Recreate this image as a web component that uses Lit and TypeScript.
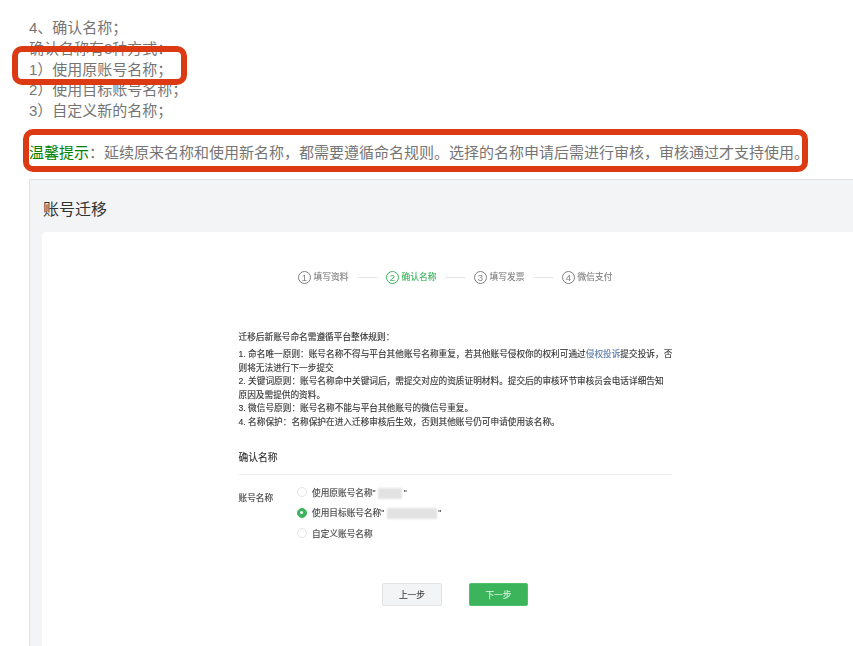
import { LitElement, html, css } from "lit";
import { customElement } from "lit/decorators.js";

const steps = ["填写资料", "确认名称", "填写发票", "微信支付"];

@customElement("app-root")
export class AppRoot extends LitElement {
  static styles = css`
    :host {
      display: block;
      position: relative;
      width: 853px;
      height: 646px;
      overflow: hidden;
      background: #fff;
      font-family: "Liberation Sans", "Noto Sans CJK SC", sans-serif;
    }
    .article {
      padding: 18px 0 0 29px;
      color: #757575;
      font-size: 15px;
      line-height: 20.75px;
    }
    .article p { margin: 0; white-space: nowrap; }
    .tip { margin-top: 21px !important; }
    .tip b { font-weight: 400; color: #008000; }
    .mark {
      position: absolute;
      box-sizing: border-box;
      border: 6px solid #dc3a13;
      border-radius: 10px;
      pointer-events: none;
    }
    .mark.one { left: 12px; top: 46px; width: 175px; height: 39px; }
    .mark.two { left: 23px; top: 129px; width: 785px; height: 43px; }
    .panel {
      margin: 15px 0 0 29px;
      width: 900px;
      height: 480px;
      box-sizing: border-box;
      background: #f3f4f6;
      border-top: 1px solid #e2e2e2;
      border-left: 1px solid #e2e2e2;
      padding: 19px 0 0 12px;
    }
    .panel h1 {
      margin: 0 0 11px 1px;
      font-size: 16px;
      line-height: 22px;
      font-weight: 400;
      color: #333;
    }
    .card {
      width: 826px;
      height: 420px;
      box-sizing: border-box;
      background: #fff;
      border-radius: 4px;
      padding-top: 39px;
      color: #333;
      font-size: 8.67px;
      filter: blur(0.35px);
      -webkit-text-stroke: 0.12px currentColor;
    }
    .steps {
      display: flex;
      justify-content: center;
      align-items: center;
      color: #808080;
      font-size: 8.75px;
      line-height: 13px;
    }
    .step { display: flex; align-items: center; gap: 2.5px; width: 50px; white-space: nowrap; }
    .step.on { color: #3cb45c; }
    .num {
      box-sizing: border-box;
      flex: none;
      width: 13px;
      height: 13px;
      border: 1px solid currentColor;
      border-radius: 50%;
      display: flex;
      align-items: center;
      justify-content: center;
      font-size: 9.5px;
      -webkit-text-stroke: 0;
    }
    .rule { width: 19px; height: 1px; background: #e2e2e2; margin: 0 9px 0 10px; }
    .body { width: 433px; margin: 47.5px auto 0; }
    .rules { line-height: 13.6px; color: #333; }
    .rules p { margin: 0; white-space: nowrap; }
    .rules .head { margin-bottom: 3.4px; }
    .rules span { color: #5a7aa8; }
    .section {
      margin: 21.5px 0 0;
      font-size: 9.75px;
      font-weight: 400;
      line-height: 14px;
      padding-bottom: 9px;
      border-bottom: 1px solid #ececec;
      color: #333;
    }
    .form { display: flex; margin-top: 7px; }
    .label { width: 58px; padding-top: 6px; line-height: 20.5px; color: #444; }
    .options { display: flex; flex-direction: column; }
    .option { display: flex; align-items: center; height: 20.5px; gap: 5.5px; color: #444; white-space: nowrap; }
    .radio {
      box-sizing: border-box;
      width: 10px;
      height: 10px;
      border: 1px solid #e4e4e4;
      border-radius: 50%;
      background: #fff;
    }
    .radio.on { background: #3cb45c; border-color: #3cb45c; display: flex; align-items: center; justify-content: center; }
    .radio.on::after { content: ""; width: 3px; height: 3px; border-radius: 50%; background: #fff; }
    .smudge { display: inline-block; height: 11px; background: #e2e2e2; filter: blur(1.2px); vertical-align: middle; margin: 0 1.5px 0 2.5px; }
    .smudge.s { width: 24px; }
    .smudge.l { width: 50px; }
    .actions { display: flex; justify-content: center; gap: 27px; margin-top: 39px; }
    .btn {
      box-sizing: border-box;
      height: 23px;
      border-radius: 2px;
      display: flex;
      align-items: center;
      justify-content: center;
      font-size: 8.75px;
    }
    .btn.prev { width: 60px; background: #f3f4f6; border: 1px solid #e3e3e3; color: #444; }
    .btn.next { width: 59px; background: #3cb45c; border: 1px solid #4fc06e; color: #d8f2df; }
  `;

  render() {
    return html`
      <div class="article">
        <p>4、确认名称；</p>
        <p>确认名称有3种方式：</p>
        <p>1）使用原账号名称；</p>
        <p>2）使用目标账号名称；</p>
        <p>3）自定义新的名称；</p>
        <p class="tip"><b>温馨提示</b>：延续原来名称和使用新名称，都需要遵循命名规则。选择的名称申请后需进行审核，审核通过才支持使用。</p>
      </div>
      <div class="mark one"></div>
      <div class="mark two"></div>
      <section class="panel">
        <h1>账号迁移</h1>
        <div class="card">
          <div class="steps">
            ${steps.map(
              (s, i) => html`
                ${i ? html`<div class="rule"></div>` : ""}
                <div class="step ${i === 1 ? "on" : ""}"><span class="num">${i + 1}</span>${s}</div>
              `
            )}
          </div>
          <div class="body">
            <div class="rules">
              <p class="head">迁移后新账号命名需遵循平台整体规则：</p>
              <p>1. 命名唯一原则：账号名称不得与平台其他账号名称重复，若其他账号侵权你的权利可通过<span>侵权投诉</span>提交投诉，否</p>
              <p>则将无法进行下一步提交</p>
              <p>2. 关键词原则：账号名称命中关键词后，需提交对应的资质证明材料。提交后的审核环节审核员会电话详细告知</p>
              <p>原因及需提供的资料。</p>
              <p>3. 微信号原则：账号名称不能与平台其他账号的微信号重复。</p>
              <p>4. 名称保护：名称保护在进入迁移审核后生效，否则其他账号仍可申请使用该名称。</p>
            </div>
            <h2 class="section">确认名称</h2>
            <div class="form">
              <div class="label">账号名称</div>
              <div class="options">
                <div class="option"><i class="radio"></i><span>使用原账号名称"<i class="smudge s"></i>"</span></div>
                <div class="option"><i class="radio on"></i><span>使用目标账号名称"<i class="smudge l"></i>"</span></div>
                <div class="option"><i class="radio"></i><span>自定义账号名称</span></div>
              </div>
            </div>
            <div class="actions">
              <div class="btn prev">上一步</div>
              <div class="btn next">下一步</div>
            </div>
          </div>
        </div>
      </section>
    `;
  }
}
